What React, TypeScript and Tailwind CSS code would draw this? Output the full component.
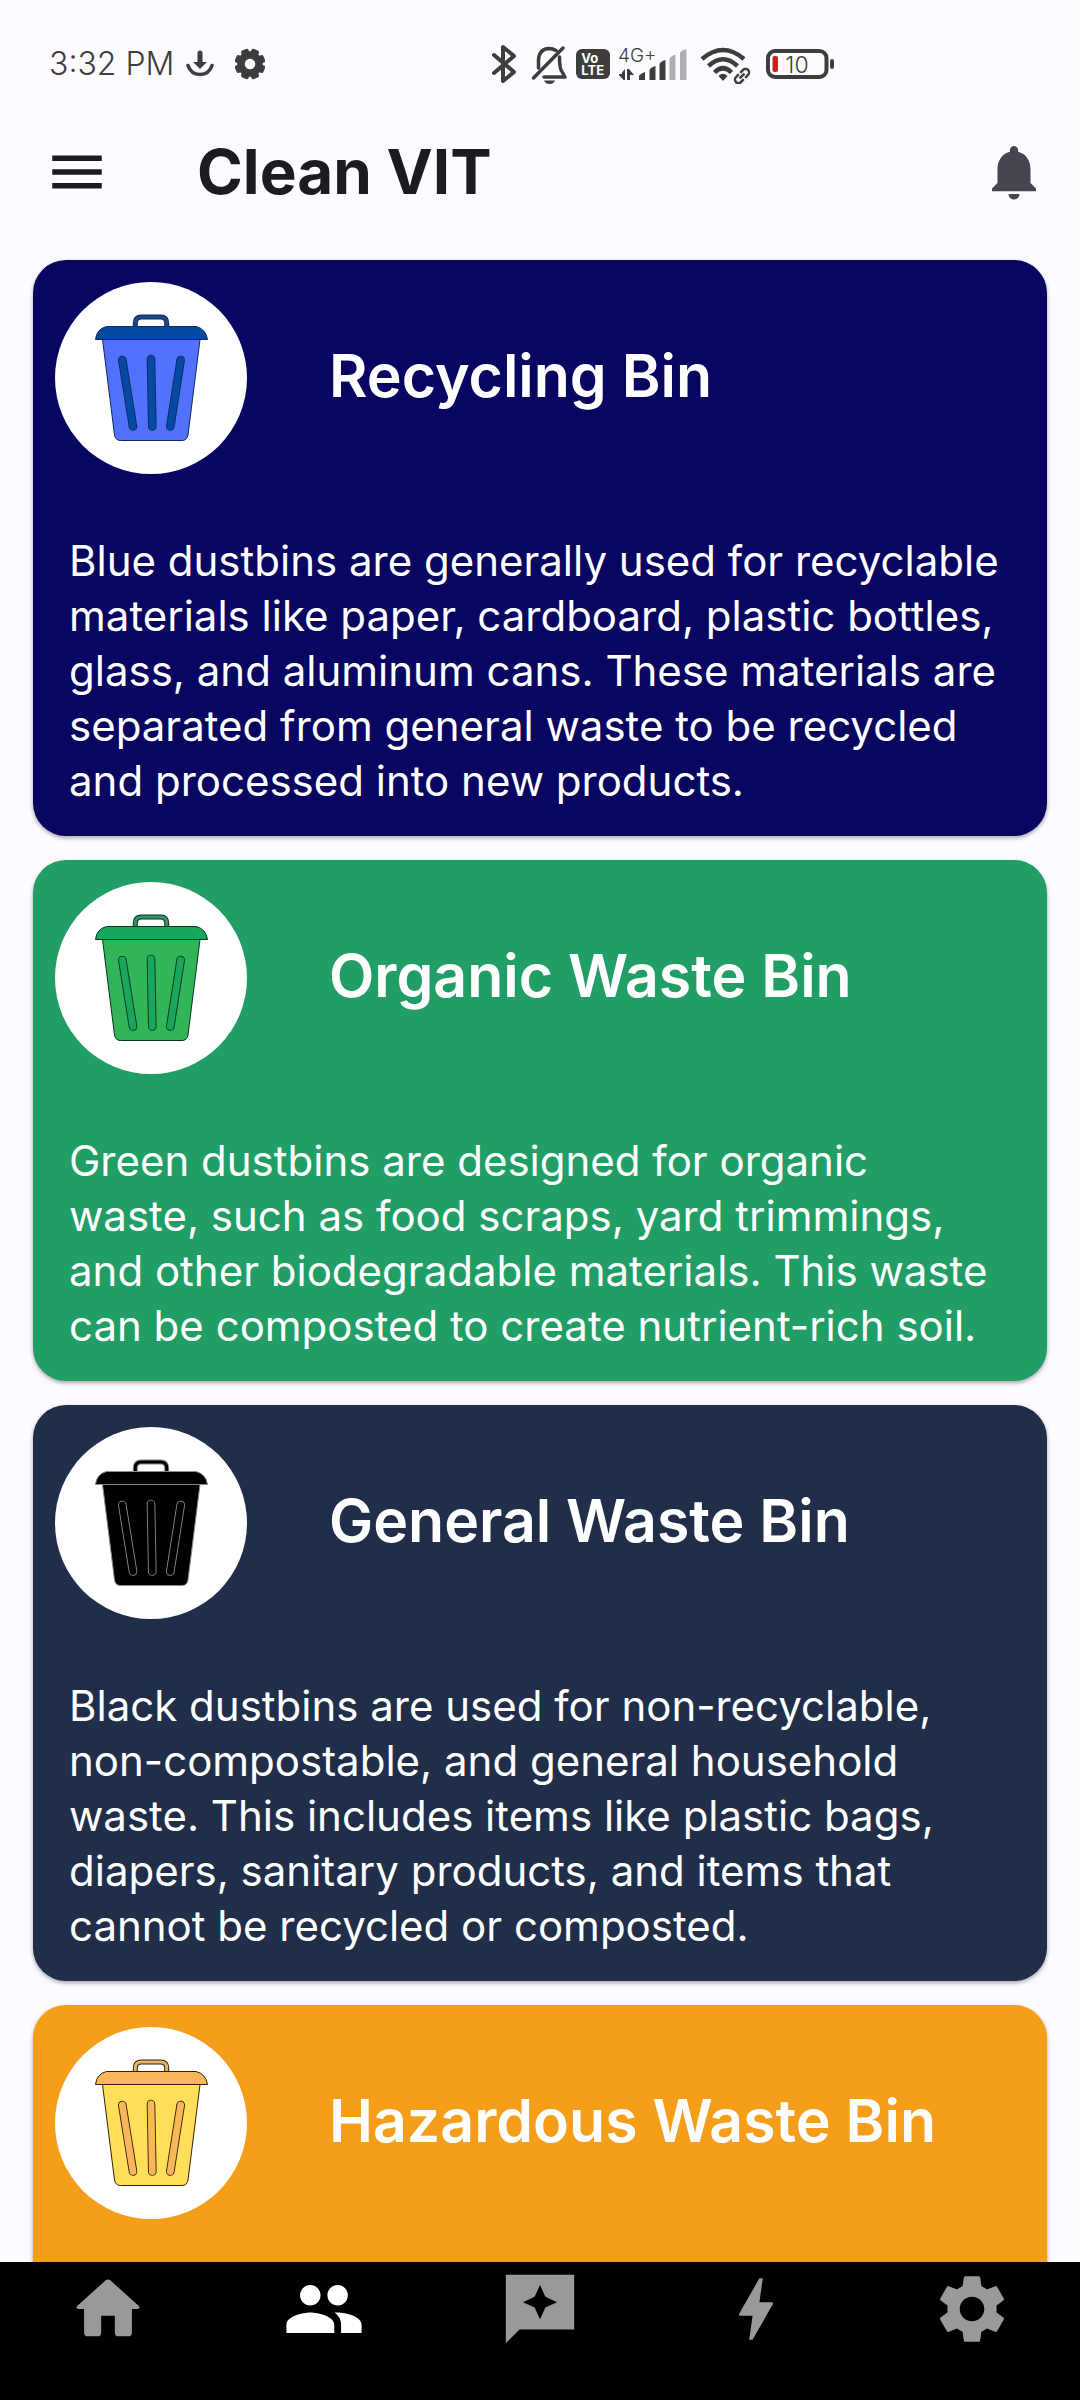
import type { ReactNode } from "react";
import { MdBolt, MdGroup, MdSettings } from "react-icons/md";

type BinColors = { lid: string; body: string; line: string; handle: string };

function Bin({ lid, body, line, handle }: BinColors) {
  const slots = ["M67.3 78 78 144.5", "M96 77 97.3 144.5", "M125.7 78 115.3 144.5"];
  return (
    <svg viewBox="0 0 192 192" className="size-48 shrink-0 rounded-full bg-white" aria-hidden="true">
      <path d="M80.3 45v-4q0-6 6-6h19.400q6 0 6 6v4" fill="none" stroke={line} strokeWidth="5" />
      <path d="M80.300 45v-4q0-6 6-6h19.400q6 0 6 6v4" fill="none" stroke={handle} strokeWidth="3" />
      <path d="M47.500 57.500 59.500 153q1 5.500 6 5.500h61.500q5 0 6-5.500L145 57.500z" fill={body} stroke={line} />
      <path d="M40.500 57.500q1-10.500 11-13h89.500q10 2.500 11.500 13z" fill={lid} stroke={line} />
      {slots.map((d) => (
        <g key={d} strokeLinecap="round">
          <path d={d} stroke={line} strokeWidth="8.600" />
          <path d={d} stroke={lid} strokeWidth="6.800" />
        </g>
      ))}
    </svg>
  );
}

type CardData = { title: string; lines: string[]; bg: string; bin: BinColors };

const cards: CardData[] = [
  {
    title: "Recycling Bin",
    bg: "bg-[#080660]",
    bin: { lid: "#044aa5", body: "#5271ff", line: "#102a58", handle: "#174a8c" },
    lines: [
      "Blue dustbins are generally used for recyclable",
      "materials like paper, cardboard, plastic bottles,",
      "glass, and aluminum cans. These materials are",
      "separated from general waste to be recycled",
      "and processed into new products.",
    ],
  },
  {
    title: "Organic Waste Bin",
    bg: "bg-[#219e65]",
    bin: { lid: "#17a65c", body: "#32b459", line: "#06351c", handle: "#339467" },
    lines: [
      "Green dustbins are designed for organic",
      "waste, such as food scraps, yard trimmings,",
      "and other biodegradable materials. This waste",
      "can be composted to create nutrient-rich soil.",
    ],
  },
  {
    title: "General Waste Bin",
    bg: "bg-[#212e49]",
    bin: { lid: "#000000", body: "#000000", line: "#8a8a8a", handle: "#000000" },
    lines: [
      "Black dustbins are used for non-recyclable,",
      "non-compostable, and general household",
      "waste. This includes items like plastic bags,",
      "diapers, sanitary products, and items that",
      "cannot be recycled or composted.",
    ],
  },
  {
    title: "Hazardous Waste Bin",
    bg: "bg-[#f49e1a]",
    bin: { lid: "#f9b759", body: "#ffde59", line: "#33200a", handle: "#e8b468" },
    lines: [],
  },
];

function Card({ title, lines, bg, bin }: CardData) {
  return (
    <article className={`min-h-[521px] shrink-0 rounded-[33px] px-[22px] pt-[22px] pb-7 text-white shadow-[0_2px_4px_rgba(0,0,0,0.35)] ${bg}`}>
      <div className="flex items-center gap-[82px]">
        <Bin {...bin} />
        <h2 className="pb-1 text-[59px] leading-[64px] font-semibold">{title}</h2>
      </div>
      {lines.length > 0 && (
        <p className="mt-[59px] pl-[14px] text-[42px] leading-[55px] whitespace-pre-line">{lines.join("\n")}</p>
      )}
    </article>
  );
}

function StatusBar() {
  return (
    <div className="flex h-32 shrink-0 items-center pl-[49px] text-[#3d3d3d]">
      <time className="text-[32px] leading-10 font-light">3:32 PM</time>
      <svg width="28" height="32" viewBox="0 0 28 32" className="ml-3" aria-label="Download">
        <path d="M14 5v10" stroke="currentColor" strokeWidth="5" strokeLinecap="round" />
        <path d="M7 14h14l-7 7z" fill="currentColor" />
        <path d="M2 17.500q3 9 12 9t12-9" fill="none" stroke="currentColor" strokeWidth="3.500" strokeLinecap="round" />
      </svg>
      <svg width="30" height="32" viewBox="-15 -16 30 32" className="ml-[21px]" aria-label="Settings">
        <circle r="9" fill="none" stroke="currentColor" strokeWidth="7.500" />
        {[22.5, 67.5, 112.5, 157.5, 202.5, 247.5, 292.5, 337.5].map((a) => (
          <rect key={a} x="-4" y="-15.400" width="8" height="6" rx="2" fill="currentColor" transform={`rotate(${a})`} />
        ))}
      </svg>
      <div className="ml-[226px] flex items-center">
        <svg width="26" height="40" viewBox="0 0 26 40" fill="none" stroke="currentColor" strokeWidth="4" strokeLinecap="round" strokeLinejoin="round" aria-label="Bluetooth">
          <path d="M3 11 23 28 12 37V3l11 9L3 29" />
        </svg>
        <svg width="36" height="40" viewBox="0 0 36 40" className="ml-3.5" aria-label="Silent">
          <path d="M2.500 34 32 4" stroke="currentColor" strokeWidth="3.500" strokeLinecap="round" />
          <path d="M7.500 24v-8Q8 5 18 4.500q4 0 7 2M28.500 13q0 9 1.500 13l4 7H13" fill="none" stroke="currentColor" strokeWidth="3.500" strokeLinejoin="round" strokeLinecap="round" />
          <path d="M13 36.500h11q-1.500 3.500-5.500 3.500t-5.500-3.500" fill="currentColor" />
        </svg>
        <div className="ml-[9px] flex h-[30px] w-[34px] flex-col justify-center rounded-md bg-[#3d3d3d] pl-[5px] text-[13px] leading-[12px] font-bold text-white">
          <span>Vo</span>
          <span>LTE</span>
        </div>
        <svg width="70" height="40" viewBox="0 0 70 40" className="ml-2" fill="currentColor" aria-label="Mobile signal">
          <text x="0" y="18" fontSize="19" fontFamily="Inter" fontWeight="300">4G+</text>
          <path d="M1 30h3v-1.500h0L7 25v11H5.500L1 31zM9 25h2l5 6h-4v5H9z" />
          <path d="M21 32q1-2 6-4v8h-6zM31.500 26q1-2.500 6-4v14h-6zM41.500 20q1-2.500 6-4v20h-6z" />
          <path d="M51.500 15q1-3 6-4.500V36h-6zM62 9q1-2.500 6.500-4V36H62z" opacity="0.400" />
        </svg>
        <svg width="52" height="40" viewBox="0 0 52 40" className="ml-3" fill="none" stroke="currentColor" strokeWidth="4.500" aria-label="Wi-Fi">
          <path d="M2 15Q23-3 44 15M8.500 22Q23 8.500 37.500 22M14.500 28.500Q23 20 31.500 28.500" />
          <path d="M18.500 32q4.500-4.500 9 0L23 37z" fill="currentColor" stroke="none" />
          <g strokeWidth="2.500" transform="rotate(-45 42 32)">
            <path d="M41 28.500h-4a3.500 3.500 0 0 0 0 7h4M43 28.500h4a3.500 3.500 0 0 1 0 7h-4M38.500 32h7" />
          </g>
        </svg>
        <svg width="70" height="40" viewBox="0 0 70 40" className="ml-3.5" aria-label="Battery 10 percent">
          <rect x="2" y="7" width="58.500" height="26" rx="7" fill="none" stroke="currentColor" strokeWidth="4" />
          <rect x="64" y="15" width="4" height="10" rx="2" fill="currentColor" />
          <rect x="6.500" y="12" width="5.500" height="16" rx="2" fill="#cc1f26" />
          <text x="31" y="28.500" fontSize="23" fontFamily="Inter" fontWeight="300" textAnchor="middle" fill="currentColor">10</text>
        </svg>
      </div>
    </div>
  );
}

function NavItem({ label, active, children }: { label: string; active?: boolean; children: ReactNode }) {
  return (
    <button
      type="button"
      aria-label={label}
      aria-current={active ? "page" : undefined}
      className={`flex flex-1 justify-center ${active ? "text-white" : "text-[#999999]"}`}
    >
      {children}
    </button>
  );
}

export default function App() {
  return (
    <div className="flex h-screen flex-col overflow-hidden bg-[#fdfbff] font-['Inter',sans-serif] text-[#1d1b1f]">
      <StatusBar />
      <header className="flex h-[88px] shrink-0 items-center px-[33px]">
        <button type="button" aria-label="Menu" className="ml-[11px]">
          <svg width="66" height="66" viewBox="0 0 24 24" fill="currentColor">
            <path d="M3 18h18v-2H3v2zm0-5h18v-2H3v2zm0-7v2h18V6H3z" />
          </svg>
        </button>
        <h1 className="ml-[87px] flex-1 text-[62px] leading-[72px] font-bold">Clean VIT</h1>
        <button type="button" aria-label="Notifications" className="text-[#49454f]">
          <svg width="66" height="66" viewBox="0 0 24 24" fill="currentColor">
            <path d="M12 22c1.100 0 2-.9 2-2h-4c0 1.100.890 2 2 2zm6-6v-5c0-3.070-1.640-5.640-4.500-6.320V4c0-.83-.67-1.500-1.500-1.500s-1.500.670-1.500 1.500v.68C7.630 5.360 6 7.920 6 11v5l-2 2v1h16v-1l-2-2z" />
          </svg>
        </button>
      </header>
      <main className="flex min-h-0 flex-1 flex-col gap-6 overflow-y-auto px-[33px] pt-11 [scrollbar-width:none]">
        {cards.map((c) => (
          <Card key={c.title} {...c} />
        ))}
      </main>
      <nav className="flex h-[138px] shrink-0 items-start bg-black pt-1.5">
        <NavItem label="Home">
          <svg width="82" height="82" viewBox="0 0 24 24" fill="currentColor">
            <path d="M10 19v-5h4v5c0 .55.45 1 1 1h3c.55 0 1-.45 1-1v-7h1.700c.46 0 .68-.57.33-.87L12.670 3.600c-.38-.34-.96-.34-1.340 0l-8.360 7.530c-.34.3-.13.87.33.87H5v7c0 .55.45 1 1 1h3c.55 0 1-.45 1-1z" />
          </svg>
        </NavItem>
        <NavItem label="Community" active>
          <MdGroup size={82} />
        </NavItem>
        <NavItem label="Reviews">
          <svg width="82" height="82" viewBox="0 0 24 24" fill="currentColor" fillRule="evenodd">
            <path d="M2 2h20v16H6l-4 4zM12 5l-1.570 3.430L7 10l3.430 1.570L12 15l1.570-3.430L17 10l-3.430-1.570z" />
          </svg>
        </NavItem>
        <NavItem label="Activity">
          <MdBolt size={82} />
        </NavItem>
        <NavItem label="Settings">
          <MdSettings size={82} />
        </NavItem>
      </nav>
    </div>
  );
}
